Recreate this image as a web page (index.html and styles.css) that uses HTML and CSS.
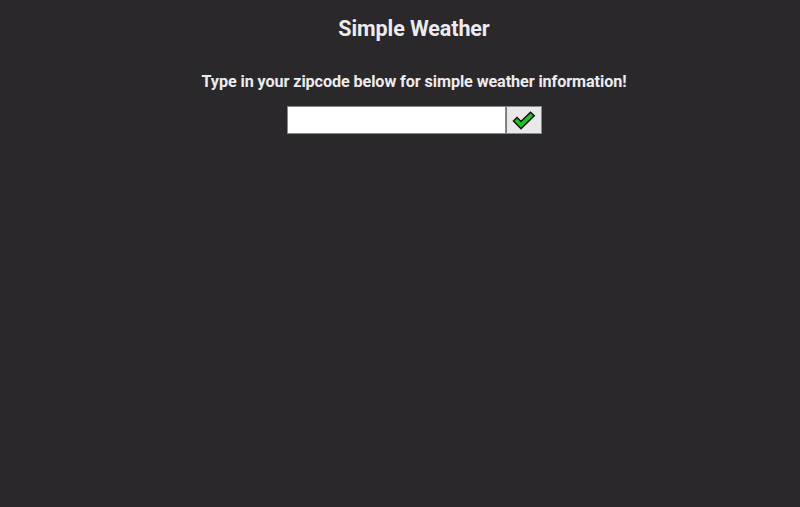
FILE: index.html
```html
<!DOCTYPE html>
<html>
<head>
<meta charset="utf-8">
<link rel="stylesheet" href="styles.css">
</head>
<body>
<main class="app">
  <h1 class="title">Simple Weather</h1>
  <p class="lead">Type in your zipcode below for simple weather information!</p>
  <form class="search">
    <input class="zip" type="text">
    <button class="go" type="button">
      <svg width="24" height="19" viewBox="0 0 24 19"><path d="M1.5 10 L5 6.5 L9 10.5 L18.5 1.2 L22.2 4.8 L9 17.8 Z" fill="#21c321" stroke="#111" stroke-width="1.5" stroke-linejoin="miter"/></svg>
    </button>
  </form>
</main>
</body>
</html>
```
FILE: styles.css
```css
html, body { margin: 0; padding: 0; }
body {
  background: #2a282a;
  color: #ecebee;
  font-family: Roboto, "Liberation Sans", sans-serif;
  height: 507px;
}
.app {
  display: flex;
  flex-direction: column;
  align-items: center;
  padding-top: 16px;
  padding-left: 28px;
}
.title {
  margin: 0;
  font-size: 21.5px;
  font-weight: 700;
  line-height: 26px;
  letter-spacing: -0.1px;
}
.lead {
  margin: 30px 0 0;
  font-size: 16.2px;
  font-weight: 700;
  line-height: 20px;
  letter-spacing: -0.1px;
}
.search {
  display: flex;
  margin-top: 14px;
}
.zip {
  box-sizing: border-box;
  width: 219px;
  height: 28px;
  margin: 0;
  border: 1px solid #8a8a8a;
  background: #fff;
  outline: none;
  padding: 0 4px;
}
.go {
  box-sizing: border-box;
  width: 36px;
  height: 28px;
  margin: 0;
  padding: 0;
  border: 1px solid #8a8a8a;
  border-left: 1px solid #777;
  background: #e9e8ea;
  display: flex;
  align-items: center;
  justify-content: center;
}
.go svg { display: block; }
```
